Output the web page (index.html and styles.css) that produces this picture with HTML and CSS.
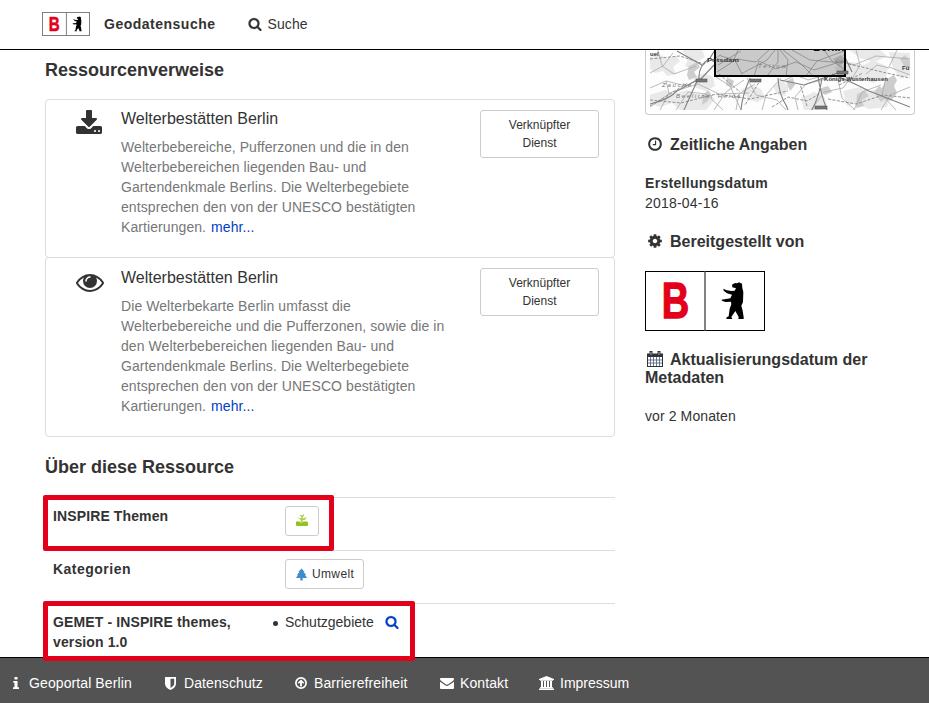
FILE: index.html
```html
<!DOCTYPE html>
<html lang="de">
<head>
<meta charset="utf-8">
<title>Geodatensuche</title>
<link rel="stylesheet" href="styles.css">
</head>
<body>
<svg class="defs" width="0" height="0" aria-hidden="true">
  <symbol id="search" viewBox="0 0 1792 1792"><path d="M1216 832q0-185-131.5-316.5t-316.5-131.5-316.5 131.5-131.5 316.5 131.5 316.5 316.5 131.5 316.5-131.5 131.5-316.5zm512 832q0 52-38 90t-90 38q-54 0-90-38l-343-342q-179 124-399 124-143 0-273.5-55.5t-225-150-150-225-55.5-273.5 55.5-273.5 150-225 225-150 273.5-55.5 273.5 55.5 225 150 150 225 55.5 273.5q0 220-124 399l343 343q37 37 37 90z"/></symbol>
  <symbol id="bear" viewBox="0 0 360 180"><path d="M261 41 270 36 276 37 282 34 291 38 292 51 295 63 294 93 289 104 293 119 296 139 296 144 280 144 281 138 271 120 259 138 262 144 244 144 245 139 251 136 254 113 259 100 258 92 242 93 232 90 229 86 238 85 256 82 261 71 246 67 236 59 235 53 245 58 260 60 269 59 273 52 262 49z"/></symbol>
</svg>

<header class="topbar">
  <svg class="logo logo-small" viewBox="0 0 360 180"><rect class="frame" x="3.5" y="3.5" width="353" height="173"/><path class="frame" d="M183 0v180"/><text transform="scale(.77 1)" x="65" y="142">B</text><use href="#bear"/></svg>
  <strong class="brand">Geodatensuche</strong>
  <a class="nav-search"><svg class="icon"><use href="#search"/></svg>Suche</a>
</header>

<main class="page">
  <section class="content">
    <h2 class="resources-title">Ressourcenverweise</h2>
    <ul class="resources">
      <li class="resource first">
        <svg class="resource-icon" viewBox="0 0 1792 1792"><path d="M1344 1344q0-26-19-45t-45-19-45 19-19 45 19 45 45 19 45-19 19-45zm256 0q0-26-19-45t-45-19-45 19-19 45 19 45 45 19 45-19 19-45zm128-224v320q0 40-28 68t-68 28h-1472q-40 0-68-28t-28-68v-320q0-40 28-68t68-28h465l135 136q58 56 136 56t136-56l136-136h464q40 0 68 28t28 68zm-325-569q17 41-14 70l-448 448q-18 19-45 19t-45-19l-448-448q-31-29-14-70 17-39 59-39h256v-448q0-26 19-45t45-19h256q26 0 45 19t19 45v448h256q42 0 59 39z"/></svg>
        <div class="resource-body">
          <h4>Welterbestätten Berlin</h4>
          <p>Welterbebereiche, Pufferzonen und die in den<br>Welterbebereichen liegenden Bau- und<br>Gartendenkmale Berlins. Die Welterbegebiete<br>entsprechen den von der UNESCO bestätigten<br>Kartierungen. <a>mehr...</a></p>
        </div>
        <a class="btn service">Verknüpfter<br>Dienst</a>
      </li>
      <li class="resource second">
        <svg class="resource-icon eye" viewBox="0 0 1792 1792"><path d="M1664 960q-152-236-381-353 61 104 61 225 0 185-131.5 316.5t-316.5 131.5-316.5-131.5-131.5-316.5q0-121 61-225-229 117-381 353 133 205 333.5 326.5t434.5 121.5 434.5-121.5 333.5-326.5zm-720-384q0-20-14-34t-34-14q-125 0-214.5 89.5t-89.5 214.5q0 20 14 34t34 14 34-14 14-34q0-86 61-147t147-61q20 0 34-14t14-34zm848 384q0 34-20 69-140 230-376.5 368.5t-499.5 138.5-499.5-139-376.5-368q-20-35-20-69t20-69q140-229 376.5-368t499.5-139 499.5 139 376.5 368q20 35 20 69z"/></svg>
        <div class="resource-body">
          <h4>Welterbestätten Berlin</h4>
          <p>Die Welterbekarte Berlin umfasst die<br>Welterbebereiche und die Pufferzonen, sowie die in<br>den Welterbebereichen liegenden Bau- und<br>Gartendenkmale Berlins. Die Welterbegebiete<br>entsprechen den von der UNESCO bestätigten<br>Kartierungen. <a>mehr...</a></p>
        </div>
        <a class="btn service">Verknüpfter<br>Dienst</a>
      </li>
    </ul>

    <h2 class="about-title">Über diese Ressource</h2>
    <div class="facts">
      <div class="fact marked mark-theme">
        <strong>INSPIRE Themen</strong>
        <a class="btn tag"><svg class="plant" width="12" height="12" viewBox="0 0 12 12"><path fill="#94c11f" d="M0 7.500h3.500q2 2 4 0H11q1 0 1 1.500v2q0 1-1 1H1q-1 0-1-1v-2z"/><path fill="#a9ce49" d="M1.500 3.600l3.500 1 .3-1.800L3.600 1l2.700.2L8 0l-.2 2L6.700 3l-.3 1.500L10.500 3.300 9.200 5.800 6.600 6v2H4.800V6z"/></svg></a>
      </div>
      <div class="fact">
        <strong class="category">Kategorien</strong>
        <a class="btn tag"><svg width="11" height="13" viewBox="0 0 12 13"><path fill="#428bca" d="M6 0l3.400 3.800H8.200l2.900 3.100H9.800L12 10.400H7.300V13H4.700v-2.600H0l2.200-3.500H.9l2.900-3.100H2.600z"/></svg><span>Umwelt</span></a>
      </div>
      <div class="fact marked mark-gemet">
        <strong>GEMET - INSPIRE themes,<br>version 1.0</strong>
        <div class="keyword"><i class="bullet"></i>Schutzgebiete<a><svg class="icon"><use href="#search"/></svg></a></div>
      </div>
    </div>
  </section>

  <aside class="side">
    <div class="map">
      <svg width="260" height="60" viewBox="0 0 260 60">
        <rect width="260" height="60" fill="#fdfdfd"/>
        <g fill="#e9e9e9">
          <path d="M0 7l11-2 6 4 9-3 4 5-7 6 3 7-9 2-4-5-8 2-5-4z"/><path d="M32 0h20l3 7-9 5-3 8-8-4 3-7z"/><path d="M0 45l15-5 9 4 13-4 11 5 9-2 8 6-9 11H30l-8-7-12 4-10-4z"/><path d="M44 27l10-4 9 4 2 9-9 5-12-4z"/><path d="M91 40l10-5 10 4 4 9-8 4-9-3z"/><path d="M123 36l9-6 7 7-4 9-8-2z"/><path d="M151 48l13-6 10 4 3 9-9 5h-14z"/><path d="M185 17l16-5 13 3 9-5 15 7-2 10-13 6-13-4-13 4-10-6z"/><path d="M199 0h31l7 6-12 6-15-4z"/><path d="M193 41l18-4 8 4 14-3 8 7-4 12-18 2-13-6-9 3z"/><path d="M239 2l21 1v22l-9 4-8-11z"/>
        </g>
        <g fill="#cdcdcd">
          <path d="M39 16l8-4 3 5-6 5 3 5-8 3-2-5z"/><path d="M53 45l5-5 3 4-3 7-6 4z"/><path d="M224 42l5-6 3 2 5-9 7-4 3 5-3 6 3 7-6 8-6-2-4 3z"/><path d="M207 44l8-3 4 5-7 4 2 6-8 2z"/><path d="M250 9l5-4 5 6v7l-6-2z"/><path d="M136 31l7-3 2 7-5 6z"/><path d="M183 9l8-4 5 5-7 7z"/><path d="M77 27l7 4-2 7-6-3z"/><path d="M168 39l10-3 4 6-7 3z"/>
        </g>
        <g class="minor-roads">
          <path d="M0 23l13-7 10-13M8 0l4 16 12 8 22-8M0 38l16-7 20 5 15-8M0 57l22-15 26-8 21 10 30-1M10 60l9-17-3-12M26 60l12-18 18 2 17 16M66 27l14 9 11 24M64 60l12-18 18-12M97 28l9 17 21 5 9 10M112 60l4-15 15-17M133 31l13-6 12 5 14-4M148 60l-3-13 11-13 20-5M161 60l13-18 19-4 9-12M188 30l4 18 13 12M204 60l8-18 19-7M206 0l4 15-7 12M231 60l9-15 20-8M236 27l-4 18 14 15M247 0l-8 17 21 8M186 9l18 6 22-9 34 3M86 60l3-16 16-10M216 24l11-9 12 3"/>
        </g>
        <g class="dashed-roads"><path d="M0 9l30-3 24 8 17-9M0 50l31 3 35-9 34 5 38-8M122 57l16-10 19 4 14-8M185 11l27 6 20 5 28 6M0 56l38-23M178 49l28 5 27-9 27 3M69 24l21 18M157 56l-7-22M189 35l24-12M111 29l-16 26"/></g>
        <g class="major-roads"><path d="M0 54Q18 50 27 41Q40 34 49 29Q48 16 60 8L65 0M48 29L34 60M49 31L64 15M100 28Q92 46 91 60M128 28Q129 45 136 55L138 60M168 26Q170 42 177 60M172 28Q170 44 162 60M130 30L154 35L196 20M182 24Q206 34 219 41L260 57M194 5L202 22M27 1L52 15"/></g>
        <path d="M65 0v26h130V0z" fill="#777" fill-opacity=".38"/>
        <g class="city-roads"><path d="M68 15L91 1M67 22l20-13 19 3 14-13M125 0l-8 10-26 14M128 0v12l-11 14M130 0l8 10-2 16M133 0l18 14 12 12M142 0l18 10 33 3M156 26l11-15 27-10M71 6l14 4 7 14M88 0l-5 12M174 0l8 11 12 8M104 26l5-15 17 8 20-7 18 8 29-9"/></g>
        <path d="M65 0v26h130V0" fill="none" stroke="#000" stroke-width="2"/>
        <g class="map-signs"><rect x="46" y="29" width="11" height="3"/><rect x="100" y="29" width="11" height="3"/><rect x="187" y="21" width="11" height="3"/><rect x="165" y="56" width="12" height="3"/></g>
        <g class="map-labels"><text x="0" y="6">uel</text><text x="57" y="12" textLength="32" lengthAdjust="spacingAndGlyphs">Potsdam</text><text class="faint" x="12" y="37" textLength="29">Zauche</text><text class="faint" x="26" y="48" textLength="64">Beelitzer Heide</text><text class="faint" x="108" y="18" textLength="28">Teltow</text><text class="big" x="163" y="1">Berlin</text><text x="174" y="31" textLength="64">Königs Wusterhausen</text><text x="252" y="20">Fü</text></g>
      </svg>
    </div>
    <h3 class="time-title"><svg class="icon" viewBox="0 0 1792 1792"><path d="M1024 544v448q0 14-9 23t-23 9h-320q-14 0-23-9t-9-23v-64q0-14 9-23t23-9h224v-352q0-14 9-23t23-9h64q14 0 23 9t9 23zm416 352q0-148-73-273t-198-198-273-73-273 73-198 198-73 273 73 273 198 198 273 73 273-73 198-198 73-273zm224 0q0 209-103 385.5t-279.5 279.5-385.5 103-385.5-103-279.5-279.5-103-385.5 103-385.5 279.5-279.5 385.5-103 385.5 103 279.5 279.5 103 385.5z"/></svg>Zeitliche Angaben</h3>
    <p class="created"><strong>Erstellungsdatum</strong><br>2018-04-16</p>
    <h3 class="provider-title"><svg class="icon" viewBox="0 0 1792 1792"><path d="M1152 896q0-106-75-181t-181-75-181 75-75 181 75 181 181 75 181-75 75-181zm512-109v222q0 12-8 23t-20 13l-185 28q-19 54-39 91 35 50 107 138 10 12 10 25t-9 23q-27 37-99 108t-94 71q-12 0-26-9l-138-108q-44 23-91 38-16 136-29 186-7 28-36 28h-222q-14 0-24.5-8.5t-11.5-21.5l-28-184q-49-16-90-37l-141 107q-10 9-25 9-14 0-25-11-126-114-165-168-7-10-7-23 0-12 8-23 15-21 51-66.5t54-70.5q-27-50-41-99l-183-27q-13-2-21-12.5t-8-23.5v-222q0-12 8-23t19-13l186-28q14-46 39-92-40-57-107-138-10-12-10-24 0-10 9-23 26-36 98.5-107.5t94.5-71.5q13 0 26 10l138 107q44-23 91-38 16-136 29-186 7-28 36-28h222q14 0 24.5 8.5t11.5 21.5l28 184q49 16 90 37l142-107q9-9 24-9 13 0 25 10 129 119 165 170 7 8 7 22 0 12-8 23-15 21-51 66.5t-54 70.5q26 50 41 98l183 28q13 2 21 12.5t8 23.5z"/></svg>Bereitgestellt von</h3>
    <svg class="logo logo-large" viewBox="0 0 360 180"><rect class="frame" x="1.5" y="1.5" width="357" height="177"/><path class="frame divider" d="M180 0v180"/><text transform="scale(.77 1)" x="65" y="142">B</text><use href="#bear"/></svg>
    <h3 class="updated-title"><svg class="icon calendar" viewBox="0 0 16 16"><rect x=".5" y="3" width="15" height="12.5" fill="#fff" stroke="#333"/><path d="M1 3h14v3H1z" fill="#333"/><path d="M3.500 6v9M6.500 6v9M9.500 6v9M12.500 6v9M1 9h14M1 12h14" stroke="#46597a" stroke-width=".8"/><path d="M4 0v4M12 0v4" stroke="#333" stroke-width="3"/><path d="M4 1v3M12 1v3" stroke="#8ab4d8"/></svg>Aktualisierungsdatum der<br>Metadaten</h3>
    <p class="updated">vor 2 Monaten</p>
  </aside>
</main>

<footer class="footer">
  <a class="link-portal"><svg width="6" height="12" viewBox="0 0 6 12"><path d="M1.500 0h3v2.500h-3zM.3 4h4.200v6.200H6V12H0v-1.800h1.500V5.800H.3z"/></svg>Geoportal Berlin</a>
  <a class="link-privacy"><svg width="11" height="13" viewBox="0 0 11 13"><path fill-rule="evenodd" d="M0 0h11v6.500Q11 10.500 5.500 13 0 10.500 0 6.500zM5.500 1.700v9.200Q9.200 8.800 9.200 6.500V1.700z"/></svg>Datenschutz</a>
  <a class="link-access"><svg width="12" height="12" viewBox="0 0 12 12"><circle cx="6" cy="6" r="5.100" fill="none" stroke="#fff" stroke-width="1.700"/><path d="M6 2.400l3.300 3.300-1.100 1.100-1.300-1.200v3.800H5.100V5.600L3.800 6.800 2.700 5.700z"/></svg>Barrierefreiheit</a>
  <a class="link-contact"><svg width="14" height="11" viewBox="0 0 14 11"><path d="M1 0h12q1 0 1 1 0 1.200-1.200 2.100L8.300 6.300Q7 7.200 5.700 6.300L1.200 3.100Q0 2.200 0 1 0 0 1 0zM0 3.700l5.200 3.600q1.800 1.200 3.600 0L14 3.700V10q0 1-1 1H1q-1 0-1-1z"/></svg>Kontakt</a>
  <a class="link-imprint"><svg width="15" height="14" viewBox="0 0 15 14"><path d="M7.500 0L15 3v1h-1v.7H1V4H0V3zM2 5h2v6h1V5h2v6h1V5h2v6h1V5h2v6h.8v1H1.200v-1H2zM.8 12.300h13.400l.8.700v1H0v-1z"/></svg>Impressum</a>
</footer>
</body>
</html>
```
FILE: styles.css
```css
*, *::after { box-sizing: border-box; }
html, body { height: 100%; }
body {
  margin: 0;
  display: flex;
  flex-direction: column;
  overflow: hidden;
  background: #fff;
  color: #333;
  font: 14px/20px "Liberation Sans", Arial, sans-serif;
}
.defs { position: absolute; }
svg { display: block; flex: none; fill: currentColor; }
h2, h3, h4, p, ul { margin: 0; padding: 0; }
ul { list-style: none; }
a { color: #0040c8; }

.topbar {
  flex: none;
  display: flex;
  align-items: center;
  height: 50px;
  padding: 0 42px 1px;
  border-bottom: 1px solid #000;
}
.logo text { font: bold 148px "Liberation Sans", sans-serif; fill: #e2001a; stroke: #e2001a; stroke-width: 4; }
.logo use { fill: #000; }
.frame { fill: none; stroke: #777; stroke-width: 7; }
.logo-small { width: 48px; height: 24px; }
.brand { margin-left: 14px; letter-spacing: .5px; }
.nav-search { display: flex; align-items: center; margin-left: 32px; color: #333; letter-spacing: .1px; }
.icon use { stroke: currentColor; stroke-width: 25; }
.nav-search .icon { width: 14px; height: 14px; margin-right: 6px; }

.page { flex: 1; min-height: 0; display: flex; padding-left: 45px; gap: 30px; }
.content { width: 570px; }
h2 { font-size: 18px; line-height: 20px; }
.resources-title { margin: 10px 0 19px; }
.resource {
  display: flex;
  align-items: flex-start;
  border: 1px solid #ddd;
  border-radius: 4px;
}
.resource.first { height: 159px; }
.resource.second { height: 180px; margin-top: -1px; }
.resource-icon { width: 28px; height: 28px; margin: 10px 18px 0 29px; }
.resource-icon.eye { margin: 10px 17px 0 30px; }
.resource-body { width: 359px; padding-top: 9px; }
.second .resource-body { padding-top: 10px; }
h4 { font-size: 16px; font-weight: normal; line-height: 20px; }
.resource p { margin-top: 8px; color: #777; white-space: nowrap; letter-spacing: .08px; }
.resource p a { margin-left: 1px; }
.btn {
  display: flex;
  border: 1px solid #ccc;
  border-radius: 3px;
  color: #333;
  font-size: 12px;
  line-height: 18px;
}
.service { width: 119px; height: 48px; margin-top: 10px; padding-top: 5px; justify-content: center; text-align: center; }

.about-title { margin: 20px 0; }
.fact {
  display: grid;
  grid-template-columns: 232px auto;
  justify-content: start;
  align-items: start;
  position: relative;
  height: 53px;
  padding: 8px 8px 0;
  border-top: 1px solid #ddd;
}
.fact strong { letter-spacing: .12px; }
.fact .category { letter-spacing: .48px; }
.tag { height: 30px; align-items: center; gap: 5px; padding: 0 9px 0 10px; justify-self: start; letter-spacing: .35px; }
.plant { margin: -3px 1px 0 0; }
.keyword { display: flex; align-items: center; }
.bullet { width: 5px; height: 5px; margin: 2px 7px 0 -12px; border-radius: 50%; background: #333; }
.keyword .icon { width: 14px; height: 14px; margin-left: 11px; }
.marked::after {
  content: "";
  position: absolute;
  z-index: 2;
  top: -3px;
  left: -2px;
  border: 5px solid #e2001a;
  border-radius: 2px;
}
.mark-theme::after { width: 291px; height: 56px; }
.mark-gemet::after { width: 372px; height: 60px; }

.side { width: 270px; }
.map {
  height: 65px;
  padding: 0 4px;
  border: 1px solid #ccc;
  border-top: 0;
  border-radius: 0 0 4px 4px;
}
.minor-roads, .major-roads, .city-roads, .dashed-roads { fill: none; }
.minor-roads { stroke: #aaa; stroke-width: .8; }
.dashed-roads { stroke: #888; stroke-width: .9; stroke-dasharray: 3 1.5; }
.major-roads { stroke: #808080; stroke-width: 1.1; }
.city-roads { stroke: #888; stroke-width: .8; }
.map-signs { fill: #777; stroke: #444; stroke-width: .5; }
.map-labels { font-size: 6px; font-weight: bold; fill: #333; }
.map-labels .faint { font-style: italic; font-weight: normal; fill: #777; }
.map-labels .big { font-size: 11px; fill: #111; }
h3 { font-size: 16px; line-height: 18px; white-space: nowrap; }
h3 .icon { display: inline-block; width: 16px; height: 16px; margin: 0 7px 0 2px; vertical-align: -2px; }
.time-title { margin-top: 21px; }
.created { margin-top: 19px; letter-spacing: .2px; }
.created strong { letter-spacing: .3px; }
.provider-title { margin-top: 20px; }
.logo-large { width: 120px; height: 60px; margin-top: 20px; }
.logo-large .frame { stroke: #000; stroke-width: 3; }
.logo-large .divider { stroke: #444; stroke-width: 4; }
.updated-title { margin-top: 20px; }
.updated { margin-top: 19px; letter-spacing: .1px; }

.footer {
  flex: none;
  display: flex;
  align-items: center;
  height: 46px;
  padding: 5px 0 0 13px;
  border-top: 1px solid #000;
  background: #535353;
}
.footer a { display: flex; align-items: center; color: #fff; letter-spacing: .1px; }
.link-portal { width: 152px; gap: 10px; }
.link-privacy { width: 130px; gap: 8px; }
.link-access { width: 145px; gap: 7px; }
.link-contact { width: 99px; gap: 6px; }
.footer .link-imprint { gap: 6px; letter-spacing: 0; }
```
